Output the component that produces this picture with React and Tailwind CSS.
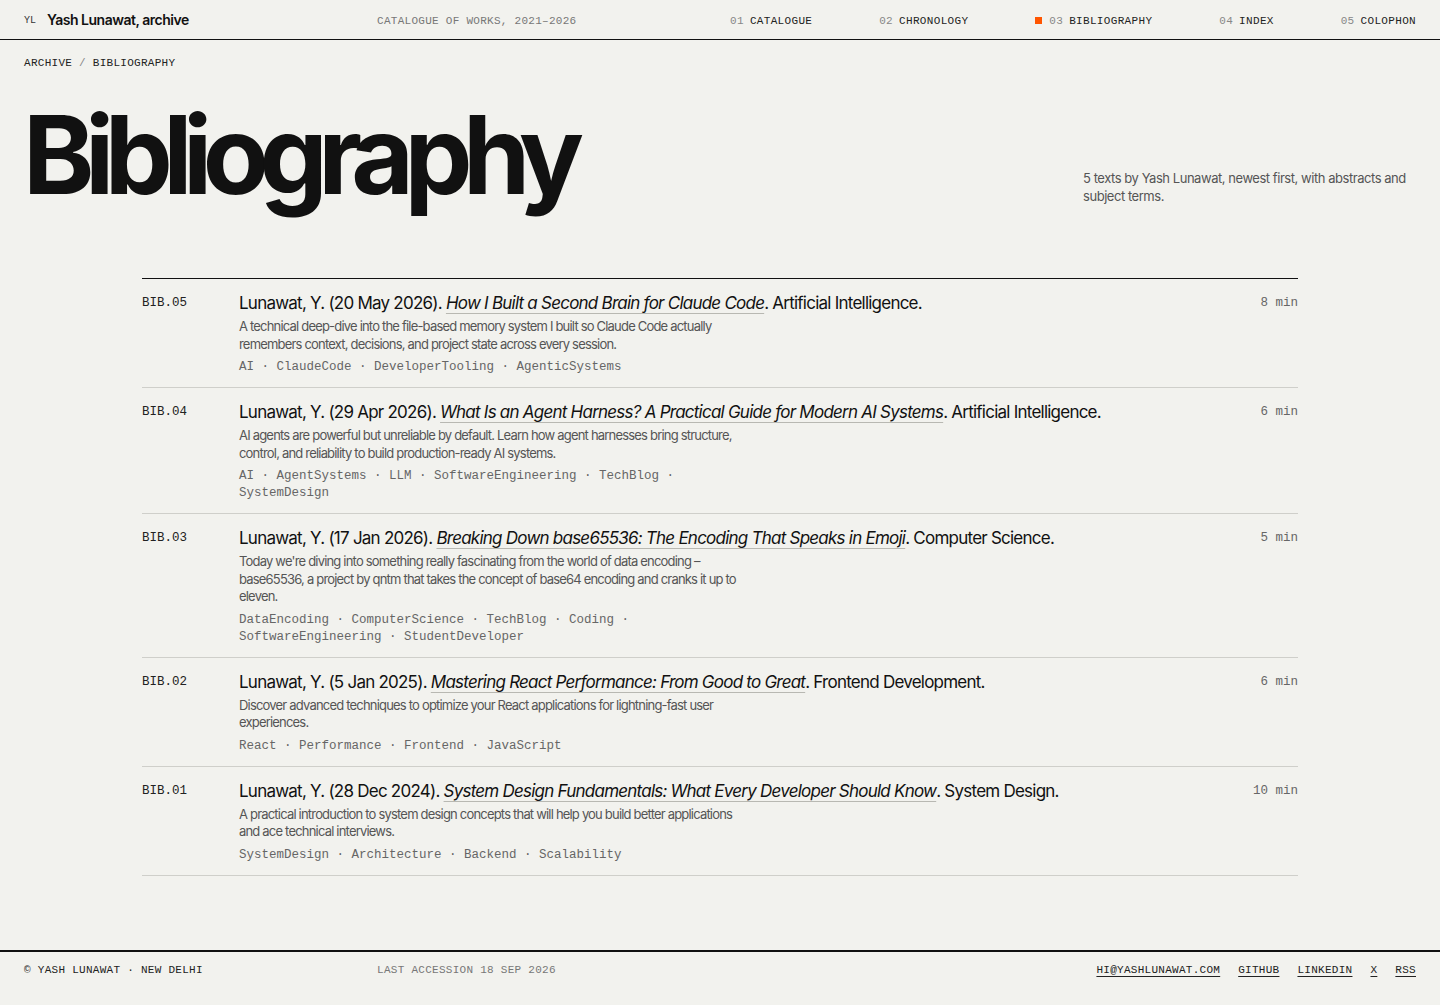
import React from 'react';

const entries = [
    {
        id: 'BIB.05',
        date: '20 May 2026',
        title: 'How I Built a Second Brain for Claude Code',
        field: 'Artificial Intelligence',
        abstract: 'A technical deep-dive into the file-based memory system I built so Claude Code actually remembers context, decisions, and project state across every session.',
        tags: ['AI', 'ClaudeCode', 'DeveloperTooling', 'AgenticSystems'],
        mins: '8 min',
    },
    {
        id: 'BIB.04',
        date: '29 Apr 2026',
        title: 'What Is an Agent Harness? A Practical Guide for Modern AI Systems',
        field: 'Artificial Intelligence',
        abstract: 'AI agents are powerful but unreliable by default. Learn how agent harnesses bring structure, control, and reliability to build production-ready AI systems.',
        tags: ['AI', 'AgentSystems', 'LLM', 'SoftwareEngineering', 'TechBlog', 'SystemDesign'],
        mins: '6 min',
    },
    {
        id: 'BIB.03',
        date: '17 Jan 2026',
        title: 'Breaking Down base65536: The Encoding That Speaks in Emoji',
        field: 'Computer Science',
        abstract: "Today we're diving into something really fascinating from the world of data encoding – base65536, a project by qntm that takes the concept of base64 encoding and cranks it up to eleven.",
        tags: ['DataEncoding', 'ComputerScience', 'TechBlog', 'Coding', 'SoftwareEngineering', 'StudentDeveloper'],
        mins: '5 min',
    },
    {
        id: 'BIB.02',
        date: '5 Jan 2025',
        title: 'Mastering React Performance: From Good to Great',
        field: 'Frontend Development',
        abstract: 'Discover advanced techniques to optimize your React applications for lightning-fast user experiences.',
        tags: ['React', 'Performance', 'Frontend', 'JavaScript'],
        mins: '6 min',
    },
    {
        id: 'BIB.01',
        date: '28 Dec 2024',
        title: 'System Design Fundamentals: What Every Developer Should Know',
        field: 'System Design',
        abstract: 'A practical introduction to system design concepts that will help you build better applications and ace technical interviews.',
        tags: ['SystemDesign', 'Architecture', 'Backend', 'Scalability'],
        mins: '10 min',
    },
];

const nav = [
    { n: '01', label: 'CATALOGUE' },
    { n: '02', label: 'CHRONOLOGY' },
    { n: '03', label: 'BIBLIOGRAPHY', active: true },
    { n: '04', label: 'INDEX' },
    { n: '05', label: 'COLOPHON' },
];

const mono = "font-['Liberation_Mono','DejaVu_Sans_Mono',monospace]";
const sans = "font-['Inter','Liberation_Sans',sans-serif]";

const Entry = ({ e }) => (
    <div className="grid grid-cols-[97px_1fr_auto] pt-3 pb-[11px] border-b border-[#cfcfca]">
        <div className={`${mono} text-[12.5px] leading-6 text-[#222]`}>{e.id}</div>
        <div>
            <p className="text-[17px] leading-6 tracking-[-0.045em] text-[#111]">
                Lunawat, Y. ({e.date}).{' '}
                <span className="italic underline decoration-[#b8b8b2] decoration-1 underline-offset-[4px]">{e.title}</span>. {e.field}.
            </p>
            <p className="mt-[3px] max-w-[505px] text-[13px] leading-[17.5px] tracking-[-0.062em] text-[#555]">{e.abstract}</p>
            <p className={`${mono} mt-[6px] max-w-[520px] text-[12.5px] leading-[17px] text-[#666]`}>
                {e.tags.join(' · ')}
            </p>
        </div>
        <div className={`${mono} text-[12.5px] leading-6 text-[#666] text-right`}>{e.mins}</div>
    </div>
);

export default function App() {
    return (
        <div className={`${sans} min-h-screen flex flex-col bg-[#f2f2ee] text-[#111]`}>
            {/* Header */}
            <header className="h-10 border-b border-[#111] px-6 grid grid-cols-4 gap-x-5 items-center">
                <div className="flex items-center gap-[11px]">
                    <span className={`${mono} pt-[2px] text-[10px] text-[#333]`}>YL</span>
                    <span className="text-[14px] font-semibold tracking-[-0.035em]">Yash Lunawat, archive</span>
                </div>
                <div className={`${mono} pt-[3px] text-[11px] tracking-[0.025em] text-[#777]`}>CATALOGUE OF WORKS, 2021–2026</div>
                <nav className={`${mono} pt-[3px] col-span-2 flex justify-between text-[11px] tracking-[0.03em]`}>
                    {nav.map(({ n, label, active }) => (
                        <span key={n} className="flex items-center">
                            {active && <span className="h-[7px] w-[7px] bg-[#ff5500] mr-[7px] -mt-[1px]" />}
                            <span className="text-[#888]">{n}</span>
                            <span className="ml-[6px] text-[#222]">{label}</span>
                        </span>
                    ))}
                </nav>
            </header>

            <main className="flex-1 px-6 pt-[15px]">
                <div className={`${mono} text-[11px] leading-4 tracking-[0.025em] text-[#222]`}>
                    ARCHIVE <span className="text-[#888]">/</span> BIBLIOGRAPHY
                </div>

                <div className="mt-[30px] flex items-end justify-between">
                    <h1 className="-ml-[1px] text-[108px] leading-none font-bold tracking-[-0.088em]">Bibliography</h1>
                    <p className="w-[333px] pb-[4px] text-[13px] leading-[18px] tracking-[-0.035em] text-[#555]">
                        5 texts by Yash Lunawat, newest first, with abstracts and subject terms.
                    </p>
                </div>

                <div className="mx-auto mt-[69px] w-[1156px] border-t border-[#111]">
                    {entries.map((e) => <Entry key={e.id} e={e} />)}
                </div>
            </main>

            {/* Footer */}
            <footer className={`${mono} border-t-2 border-[#111] px-6 pt-[10px] pb-[27px] grid grid-cols-4 gap-x-5 text-[11px] leading-4 tracking-[0.025em]`}>
                <div className="text-[#222]">© YASH LUNAWAT · NEW DELHI</div>
                <div className="text-[#777]">LAST ACCESSION 18 SEP 2026</div>
                <div className="col-span-2 flex justify-end gap-[18px] text-[#222]">
                    {['HI@YASHLUNAWAT.COM', 'GITHUB', 'LINKEDIN', 'X', 'RSS'].map((l) => (
                        <a key={l} href="#" className="underline underline-offset-[3px] decoration-1">{l}</a>
                    ))}
                </div>
            </footer>
        </div>
    );
}
